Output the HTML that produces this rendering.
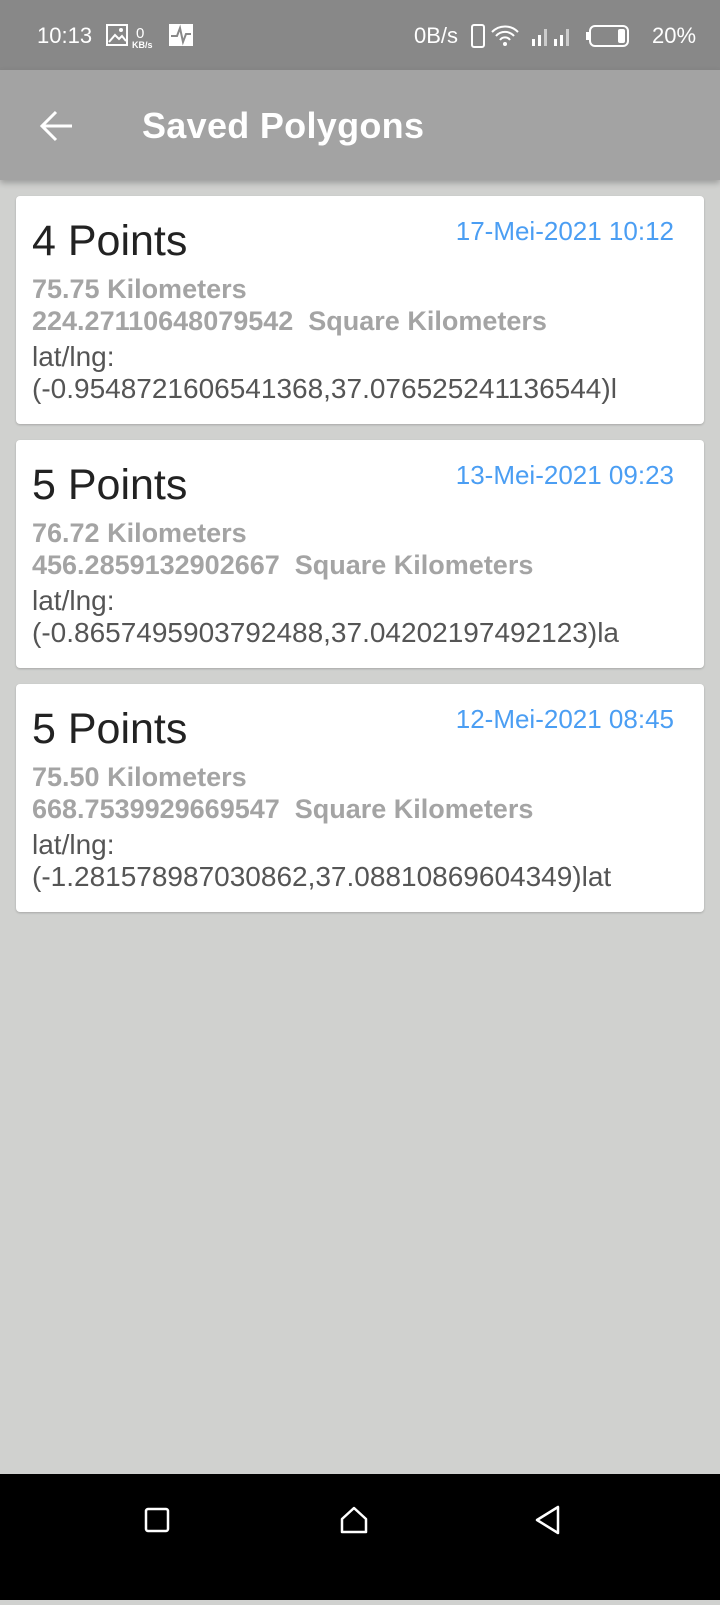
<!DOCTYPE html>
<html><head><meta charset="utf-8"><style>
*{margin:0;padding:0;box-sizing:border-box}
body{width:720px;height:1600px;background:#d0d1cf;font-family:"Liberation Sans",sans-serif;position:relative;overflow:hidden}
.sb{position:absolute;top:0;left:0;width:720px;height:70px;background:#888888;color:#fff;font-size:22px}
.ab{position:absolute;top:70px;left:0;width:720px;height:110px;background:#a3a3a3;box-shadow:0 3px 6px rgba(0,0,0,.25)}
.ab .t{position:absolute;left:142px;top:35px;color:#fff;font-size:36px;font-weight:bold;letter-spacing:0.3px}
.card{position:absolute;left:16px;width:688px;height:228px;background:#fff;border-radius:4px;box-shadow:0 1px 2px rgba(0,0,0,.2)}
.p{position:absolute;left:16px;top:21px;font-size:43px;color:#222}
.d{position:absolute;right:30px;top:20px;font-size:26px;color:#4b9ef3}
.g{position:absolute;left:16px;font-size:27px;font-weight:bold;color:#a4a4a4;white-space:nowrap}
.l{position:absolute;left:16px;font-size:28px;color:#555;line-height:32px;white-space:nowrap}
.nav{position:absolute;top:1474px;left:0;width:720px;height:126px;background:#000}
</style></head><body>
<div class="sb">
<span style="position:absolute;left:37px;top:23px">10:13</span>
<svg style="position:absolute;left:106px;top:24px" width="90" height="26"><rect x="1" y="1" width="20" height="20" fill="none" stroke="#fff" stroke-width="2"/><path d="M3 18l6-7 4 4 3-3 4 5" fill="none" stroke="#fff" stroke-width="2"/><circle cx="15" cy="6" r="2" fill="#fff"/><text x="30" y="14" fill="#fff" font-size="15" font-family="Liberation Sans">0</text><text x="26" y="24" fill="#fff" font-size="9" font-weight="bold" font-family="Liberation Sans">KB/s</text><rect x="63" y="0" width="24" height="22" fill="#fff"/><path d="M65 12h6l3-8 3 14 3-8h5" fill="none" stroke="#888" stroke-width="2"/></svg>
<span style="position:absolute;left:414px;top:23px">0B/s</span>
<svg style="position:absolute;left:470px;top:22px" width="235" height="28"><rect x="2" y="3" width="12" height="22" rx="2" fill="none" stroke="#fff" stroke-width="2"/><path d="M22 10a18 18 0 0 1 26 0M26 14a12 12 0 0 1 18 0M30 18a6 6 0 0 1 10 0" fill="none" stroke="#fff" stroke-width="2"/><circle cx="35" cy="22" r="2" fill="#fff"/><rect x="62" y="17" width="3" height="7" fill="#fff"/><rect x="68" y="13" width="3" height="11" fill="#fff"/><rect x="74" y="7" width="3" height="17" fill="#ccc"/><rect x="84" y="17" width="3" height="7" fill="#fff"/><rect x="90" y="13" width="3" height="11" fill="#fff"/><rect x="96" y="7" width="3" height="17" fill="#ccc"/><rect x="120" y="4" width="38" height="20" rx="5" fill="none" stroke="#fff" stroke-width="2"/><rect x="148" y="7" width="7" height="14" rx="2" fill="#fff"/><rect x="116" y="10" width="3" height="8" fill="#fff"/></svg>
<span style="position:absolute;left:652px;top:23px">20%</span>
</div>
<div class="ab">
<svg style="position:absolute;left:38px;top:40px" width="36" height="32"><path d="M34 16H4M18 2L4 16l14 14" fill="none" stroke="#fff" stroke-width="3"/></svg>
<div class="t">Saved Polygons</div>
</div>

<div class="card" style="top:196px">
<div class="p">4 Points</div><div class="d">17-Mei-2021 10:12</div>
<div class="g" style="top:78px">75.75 Kilometers</div>
<div class="g" style="top:110px">224.27110648079542&nbsp; Square Kilometers</div>
<div class="l" style="top:145px">lat/lng:<br>(-0.9548721606541368,37.076525241136544)l</div>
</div>
<div class="card" style="top:440px">
<div class="p">5 Points</div><div class="d">13-Mei-2021 09:23</div>
<div class="g" style="top:78px">76.72 Kilometers</div>
<div class="g" style="top:110px">456.2859132902667&nbsp; Square Kilometers</div>
<div class="l" style="top:145px">lat/lng:<br>(-0.8657495903792488,37.04202197492123)la</div>
</div>
<div class="card" style="top:684px">
<div class="p">5 Points</div><div class="d">12-Mei-2021 08:45</div>
<div class="g" style="top:78px">75.50 Kilometers</div>
<div class="g" style="top:110px">668.7539929669547&nbsp; Square Kilometers</div>
<div class="l" style="top:145px">lat/lng:<br>(-1.281578987030862,37.08810869604349)lat</div>
</div>

<div class="nav">
<svg width="720" height="126"><rect x="146" y="35" width="22" height="22" rx="2" fill="none" stroke="#fff" stroke-width="2.5"/><path d="M342 58V45l12-11 12 11v13z" fill="none" stroke="#fff" stroke-width="2.5" stroke-linejoin="round"/><path d="M558 33v26l-21-13z" fill="none" stroke="#fff" stroke-width="2.5" stroke-linejoin="round"/></svg>
</div>
</body></html>
